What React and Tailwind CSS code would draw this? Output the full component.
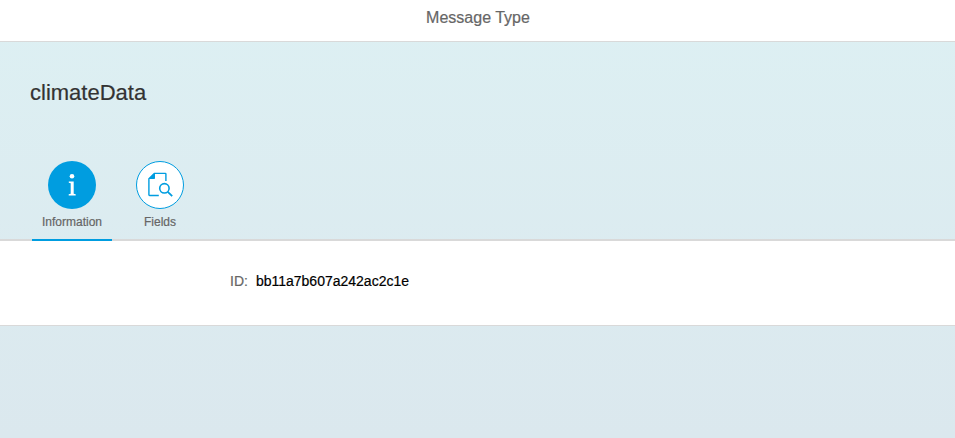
export default function App() {
  return (
    <div className="flex h-[438px] w-full flex-col overflow-hidden bg-linear-to-b from-[#ddf0f3] to-[#dbe8ee] font-['Liberation_Sans',Arial,sans-serif] [-webkit-text-stroke:0.2px]">
      <header className="flex h-[42px] shrink-0 justify-center border-b border-[#d9d9d9] bg-white pl-px pt-[6px]">
        <h1 className="text-[16px] leading-6 text-[#666]">Message Type</h1>
      </header>
      <section className="h-[119px] shrink-0 px-[30px] pt-[37px]">
        <h2 className="text-[22px] leading-[28px] text-[#333]">climateData</h2>
      </section>
      <nav className="flex h-[80px] shrink-0 gap-2 border-b-2 border-[#d9d9d9] px-8">
        <div className="-mb-[2px] flex h-[80px] w-[80px] flex-col items-center border-b-2 border-[#009de0]">
          <div className="flex size-12 items-center justify-center rounded-full bg-[#009de0]">
            <svg width="48" height="48" viewBox="0 0 48 48" fill="#fff">
              <circle cx="24" cy="15.2" r="2.3" />
              <path d="M20.8 20.4h4.9v12.3l2 .5v1.3h-7v-1.3l2-.5V22.3l-1.9-.5z" />
            </svg>
          </div>
          <span className="mt-[5px] text-[12px] leading-4 text-[#666]">Information</span>
        </div>
        <div className="flex w-[80px] flex-col items-center">
          <div className="flex size-12 items-center justify-center rounded-full border border-[#009de0] bg-white">
            <svg width="46" height="46" viewBox="1 1 46 46" fill="none" stroke="#009de0" strokeWidth="1.4">
              <path d="M22.8 34.5H13.6Q12.9 34.5 12.9 33.8V17.7L18.3 12.4H29.3Q29.9 12.4 29.9 13V20" />
              <path d="M12.9 17.7L18.3 12.4H19V17.2Q19 18 18.2 18H12.9z" fill="#009de0" stroke="none" />
              <circle cx="28.4" cy="27.3" r="4.7" strokeWidth="1.6" />
              <path d="M31.8 30.8l4.4 4.3" strokeWidth="1.8" />
            </svg>
          </div>
          <span className="mt-[5px] text-[12px] leading-4 text-[#666]">Fields</span>
        </div>
      </nav>
      <main className="flex h-[85px] shrink-0 gap-2 border-b border-[#d9d9d9] bg-white pl-[230px] pt-[30px] text-[14px] leading-5">
        <span className="text-[#666]">ID:</span>
        <span className="text-black">bb11a7b607a242ac2c1e</span>
      </main>
    </div>
  );
}
